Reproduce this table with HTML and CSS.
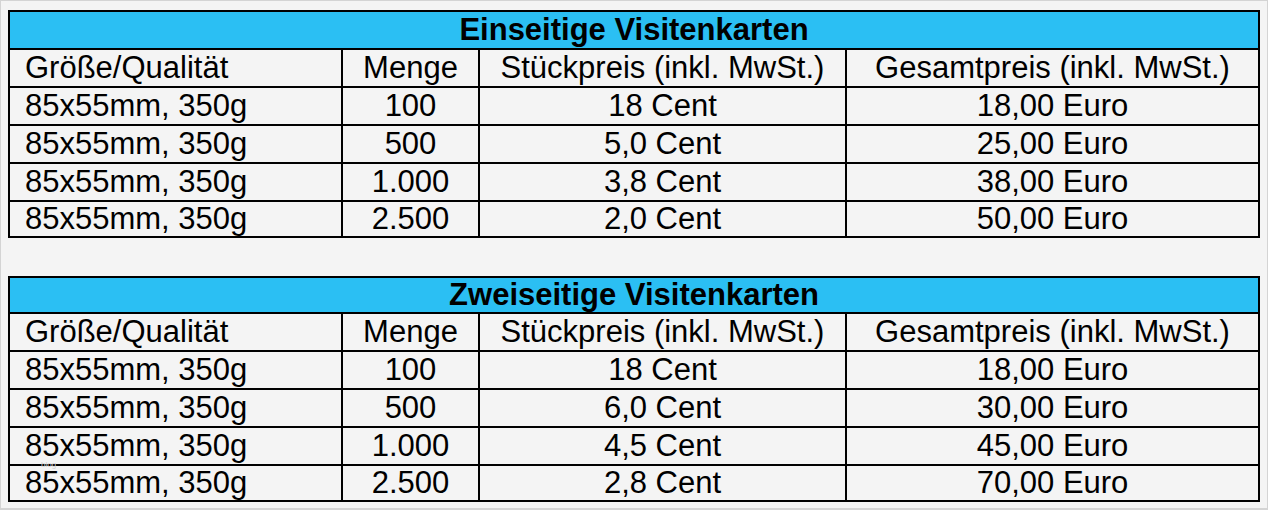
FILE: index.html
```html
<!DOCTYPE html>
<html lang="de">
<head>
<meta charset="utf-8">
<title>Visitenkarten Preise</title>
<link rel="stylesheet" href="styles.css">
</head>
<body>
<div class="page">
  <table class="prices">
    <colgroup><col class="c1"><col class="c2"><col class="c3"><col class="c4"></colgroup>
    <tr class="title"><th colspan="4">Einseitige Visitenkarten</th></tr>
    <tr><td class="first">Größe/Qualität</td><td>Menge</td><td>Stückpreis (inkl. MwSt.)</td><td>Gesamtpreis (inkl. MwSt.)</td></tr>
    <tr><td class="first">85x55mm, 350g</td><td>100</td><td>18 Cent</td><td>18,00 Euro</td></tr>
    <tr><td class="first">85x55mm, 350g</td><td>500</td><td>5,0 Cent</td><td>25,00 Euro</td></tr>
    <tr><td class="first">85x55mm, 350g</td><td>1.000</td><td>3,8 Cent</td><td>38,00 Euro</td></tr>
    <tr class="last"><td class="first">85x55mm, 350g</td><td>2.500</td><td>2,0 Cent</td><td>50,00 Euro</td></tr>
  </table>
  <div class="second">
    <table class="prices">
      <colgroup><col class="c1"><col class="c2"><col class="c3"><col class="c4"></colgroup>
      <tr class="title"><th colspan="4">Zweiseitige Visitenkarten</th></tr>
      <tr><td class="first">Größe/Qualität</td><td>Menge</td><td>Stückpreis (inkl. MwSt.)</td><td>Gesamtpreis (inkl. MwSt.)</td></tr>
      <tr><td class="first">85x55mm, 350g</td><td>100</td><td>18 Cent</td><td>18,00 Euro</td></tr>
      <tr><td class="first">85x55mm, 350g</td><td>500</td><td>6,0 Cent</td><td>30,00 Euro</td></tr>
      <tr><td class="first">85x55mm, 350g</td><td>1.000</td><td>4,5 Cent</td><td>45,00 Euro</td></tr>
      <tr class="last"><td class="first">85x55mm, 350g</td><td>2.500</td><td>2,8 Cent</td><td>70,00 Euro</td></tr>
    </table>
    <span class="mark">blog</span>
  </div>
</div>
</body>
</html>
```
FILE: styles.css
```css
html, body {
  margin: 0;
  padding: 0;
  background: #f4f4f4;
}
.page {
  box-sizing: border-box;
  width: 1268px;
  height: 510px;
  border: 1px solid #d4d4d4;
  border-bottom-width: 2px;
  padding: 9px 10px 0 7px;
  background: #f4f4f4;
  font-family: "Liberation Sans", Arial, sans-serif;
  color: #000;
}
.prices {
  border-collapse: collapse;
  width: 1250px;
  table-layout: fixed;
  font-size: 31px;
}
.c1 { width: 333px; }
.c2 { width: 137px; }
.c3 { width: 367px; }
.c4 { width: 413px; }
.prices th,
.prices td {
  border: 2px solid #000;
  padding: 0;
  height: 36px;
  line-height: 36px;
  text-align: center;
  white-space: nowrap;
  font-weight: normal;
  overflow: visible;
}
.prices .title th {
  background: #2bbff3;
  font-weight: bold;
}
.prices td.first {
  text-align: left;
  padding-left: 15px;
}
.prices tr.last td {
  height: 34px;
  line-height: 34px;
}
.second {
  position: relative;
  margin-top: 38px;
}
.second .title th {
  height: 34px;
  line-height: 34px;
}
.mark {
  position: absolute;
  left: 33px;
  top: 185px;
  font-size: 8px;
  line-height: 8px;
  color: #cfcfcf;
  font-family: "Liberation Sans", Arial, sans-serif;
}
```
